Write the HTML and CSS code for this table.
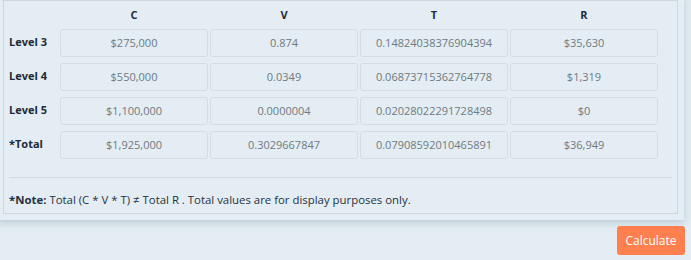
FILE: index.html
```html
<!DOCTYPE html>
<html lang="en">
<head>
<meta charset="utf-8">
<title>Totals</title>
<link rel="stylesheet" href="styles.css">
</head>
<body>
<div class="card">
  <div class="panel">
    <div class="grid">
      <div class="head"></div>
      <div class="head">C</div>
      <div class="head">V</div>
      <div class="head">T</div>
      <div class="head">R</div>

      <div class="label">Level 3</div>
      <div class="cell">$275,000</div>
      <div class="cell">0.874</div>
      <div class="cell">0.14824038376904394</div>
      <div class="cell">$35,630</div>

      <div class="label">Level 4</div>
      <div class="cell">$550,000</div>
      <div class="cell">0.0349</div>
      <div class="cell">0.06873715362764778</div>
      <div class="cell">$1,319</div>

      <div class="label">Level 5</div>
      <div class="cell">$1,100,000</div>
      <div class="cell">0.0000004</div>
      <div class="cell">0.02028022291728498</div>
      <div class="cell">$0</div>

      <div class="label">*Total</div>
      <div class="cell">$1,925,000</div>
      <div class="cell">0.3029667847</div>
      <div class="cell">0.07908592010465891</div>
      <div class="cell">$36,949</div>
    </div>
    <hr class="sep">
    <p class="note"><b>*Note:</b> Total (C * V * T) &ne; Total R . Total values are for display purposes only.</p>
  </div>
</div>
<div class="actions">
  <button class="btn">Calculate</button>
</div>
</body>
</html>
```
FILE: styles.css
```css
*, *::before, *::after {
  box-sizing: border-box;
}
html, body {
  margin: 0;
  padding: 0;
}
body {
  background: #e3edf3;
  font-family: "Open Sans", "Noto Sans", sans-serif;
  font-size: 11px;
  color: #212b36;
  width: 691px;
  height: 260px;
  overflow: hidden;
}
.card {
  width: 687px;
  margin: -6px 0 0 -3px;
  padding: 6px;
  background: #e4edf3;
  box-shadow: 0 3px 8px rgba(60, 80, 95, 0.22);
}
.panel {
  width: 675px;
  border: 1px solid #d2d6d8;
  padding: 6px 5px 0 5px;
}
.grid {
  display: grid;
  grid-template-columns: 49px repeat(4, 148px);
  column-gap: 2px;
  row-gap: 6px;
  align-items: center;
}
.head {
  font-weight: 700;
  text-align: center;
  height: 16px;
  line-height: 16px;
  color: #1d2a38;
}
.label {
  font-weight: 700;
  color: #1d2a38;
  margin-top: -3px;
  line-height: 16px;
}
.cell {
  height: 28px;
  line-height: 26px;
  border: 1px solid #d4dde3;
  border-radius: 3px;
  text-align: center;
  color: #6f7a82;
  background: #e3edf3;
}
.sep {
  border: 0;
  border-top: 1px solid #d3d8db;
  margin: 18px 0 0 0;
  height: 0;
}
.note {
  margin: 0;
  padding: 14px 0 5px 0;
  line-height: 16px;
  font-size: 11.4px;
  color: #253240;
}
.note b {
  font-weight: 700;
}
.actions {
  display: flex;
  padding: 6px 0 0 617px;
}
.btn {
  width: 68px;
  height: 29px;
  border: 0;
  border-radius: 3px;
  background: #ff7f4f;
  color: #ffffff;
  font-family: "Open Sans", "Noto Sans", sans-serif;
  font-size: 12px;
  padding: 0;
}
```
